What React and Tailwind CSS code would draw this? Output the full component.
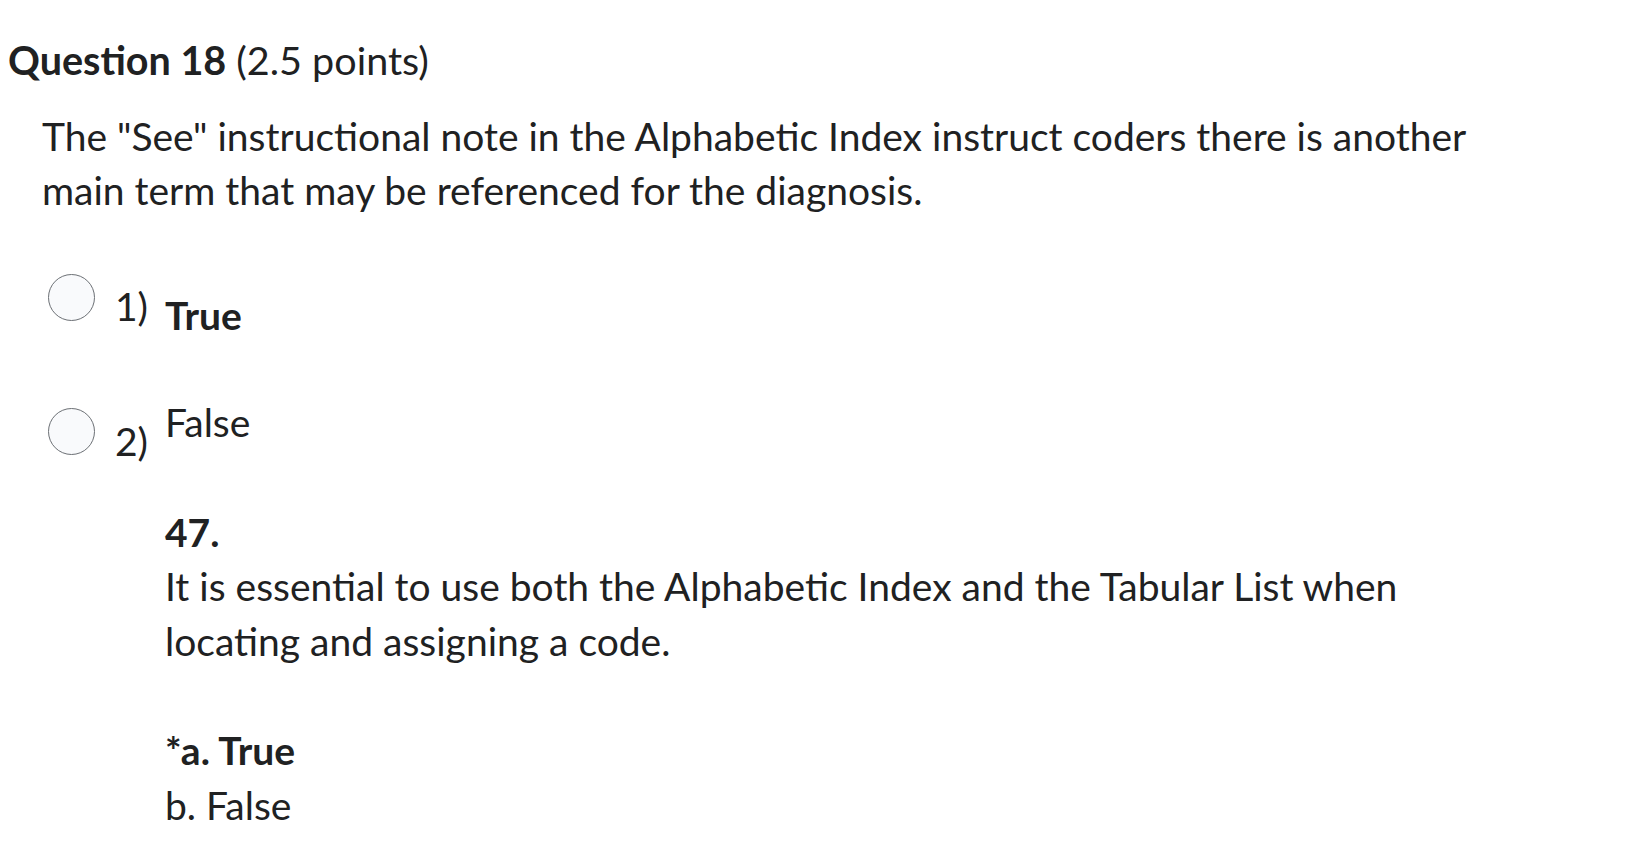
const Radio = ({ className = '' }) => (
  <div
    className={`h-[47px] w-[47px] shrink-0 rounded-full border-[1.5px] border-[#6c7075] bg-[#f9fafc] ${className}`}
  />
)

export default function App() {
  return (
    <div className="min-h-screen bg-white font-['Lato',sans-serif] text-[#202122]">
      <div className="pt-[38px] pl-[8px] text-[39.5px] leading-[44px]">
        <span className="font-bold">Question 18</span> (2.5 points)
      </div>

      <div className="mt-[27px] w-[1480px] pl-[42px] text-[39px] leading-[54px]">
        The "See" instructional note in the Alphabetic Index instruct coders
        there is another main term that may be referenced for the diagnosis.
      </div>

      <div className="mt-[57px] flex items-start pl-[48px] text-[39px] leading-[54px]">
        <Radio />
        <div className="mt-[5px] w-[70px] pl-[20px]">1)</div>
        <div className="mt-[14px] font-bold">True</div>
      </div>

      <div className="mt-[53px] flex items-start pl-[48px] text-[39px] leading-[54.5px]">
        <Radio className="mt-[13px]" />
        <div className="mt-[19px] w-[70px] pl-[20px]">2)</div>
        <div className="w-[1270px]">
          <div>False</div>
          <div className="mt-[55px] font-bold">47.</div>
          <div>
            It is essential to use both the Alphabetic Index and the Tabular
            List when locating and assigning a code.
          </div>
          <div className="mt-[55px] font-bold">*a. True</div>
          <div>b. False</div>
        </div>
      </div>
    </div>
  )
}
